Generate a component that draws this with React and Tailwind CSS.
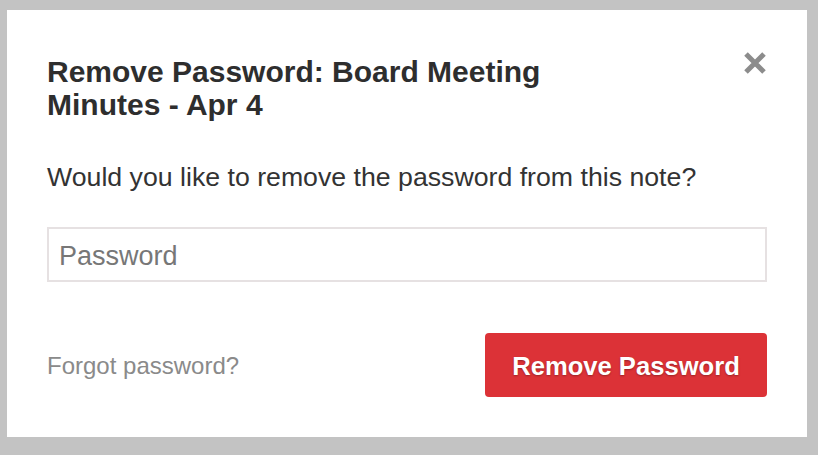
import React, { useState } from "react";

const CloseIcon = () => (
  <svg width="24" height="24" viewBox="0 0 24 24" fill="none">
    <path d="M3 3 L21 21 M21 3 L3 21" stroke="#8c8c8c" strokeWidth="5" strokeLinecap="butt" />
  </svg>
);

const App = () => {
  const [password, setPassword] = useState("");

  return (
    <div
      className="w-[818px] h-[455px] bg-[#c3c3c3] pt-[10px] pl-[7px]"
      style={{ fontFamily: '"Liberation Sans", Arial, sans-serif' }}
    >
      <div className="relative w-[800px] h-[427px] bg-white px-10 pt-[45px] pb-10">
        <button className="absolute top-[41px] right-10 w-6 h-6 flex items-center justify-center">
          <CloseIcon />
        </button>

        <h1 className="max-w-[560px] text-[30px] leading-[33px] font-bold text-[#2e2e2e]">
          Remove Password: Board Meeting Minutes - Apr 4
        </h1>

        <p className="mt-[40px] text-[26.7px] leading-[32px] text-[#333]">
          Would you like to remove the password from this note?
        </p>

        <input
          type="password"
          value={password}
          onChange={(e) => setPassword(e.target.value)}
          placeholder="Password"
          className="mt-[34px] block w-[720px] h-[55px] border-2 border-[#e6e1e2] px-[10px] pt-[3px] text-[27px] text-[#333] placeholder:text-[#777] outline-none"
        />

        <div className="mt-[51px] flex items-center justify-between">
          <a href="#" className="pt-[2px] text-[24px] text-[#8a8a8a]">
            Forgot password?
          </a>
          <button className="w-[282px] h-16 pt-[2px] rounded bg-[#dc3237] text-white text-[25.6px] font-bold [text-shadow:0_1px_2px_rgba(0,0,0,0.3)]">
            Remove Password
          </button>
        </div>
      </div>
    </div>
  );
};

export default App;
